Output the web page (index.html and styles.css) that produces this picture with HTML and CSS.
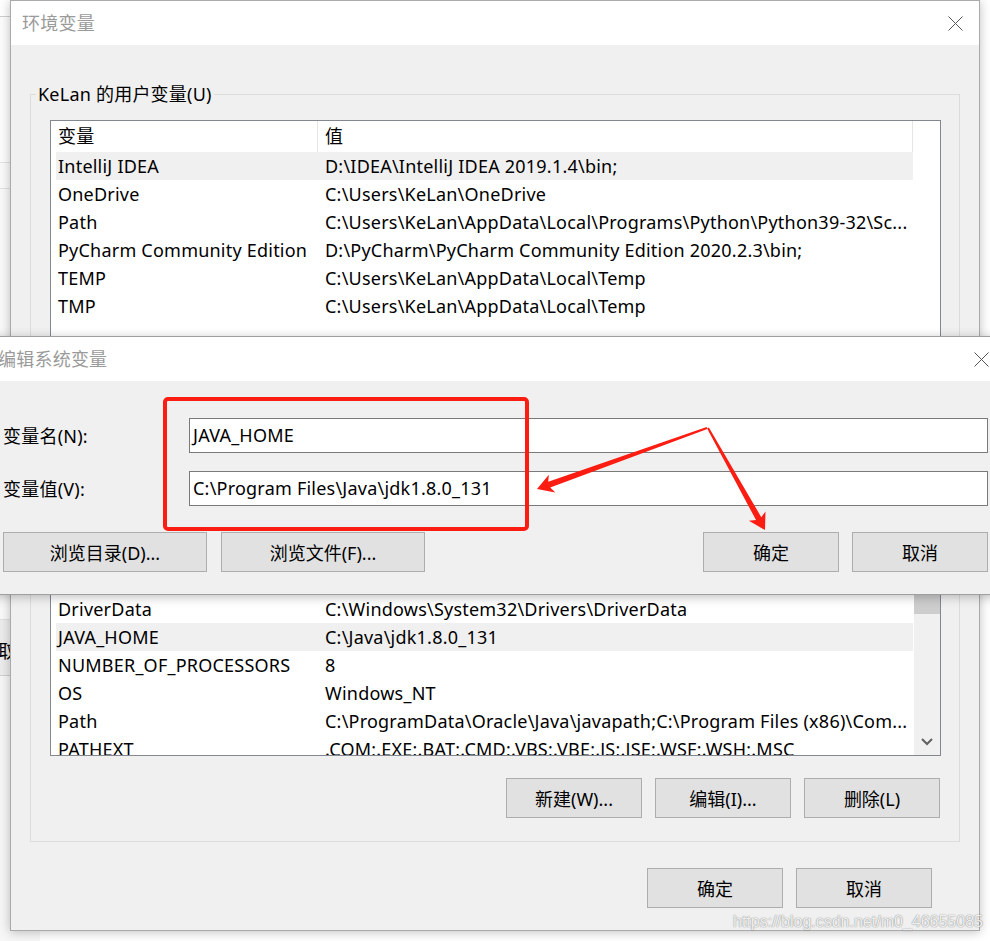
FILE: index.html
```html
<!DOCTYPE html>
<html lang="zh-CN">
<head>
<meta charset="utf-8">
<title>环境变量</title>
<link rel="stylesheet" href="styles.css">
</head>
<body>
<div class="desk">
  <div class="bgwin">
    <div class="bg-seg s1"></div>
    <div class="bg-seg s2"></div>
    <div class="bg-seg s3"></div>
    <div class="bg-seg s4"></div>
    <div class="bg-seg s5"><span class="bg-btn">取消</span></div>
    <div class="bg-seg s6"></div>
  </div>

  <div class="win">
    <div class="titlebar">
      <span class="title">环境变量</span>
      <svg class="close" viewBox="0 0 15 15"><path d="M0.5 0.5L14.5 14.5M14.5 0.5L0.5 14.5"/></svg>
    </div>
    <div class="body">
      <fieldset class="group">
        <legend>KeLan 的用户变量(U)</legend>
        <div class="group-in">
          <div class="list user">
            <div class="rows">
              <div class="row head"><span class="k">变量</span><span class="v">值</span></div>
              <div class="row sel"><span class="k">IntelliJ IDEA</span><span class="v">D:\IDEA\IntelliJ IDEA 2019.1.4\bin;</span></div>
              <div class="row"><span class="k">OneDrive</span><span class="v">C:\Users\KeLan\OneDrive</span></div>
              <div class="row"><span class="k">Path</span><span class="v">C:\Users\KeLan\AppData\Local\Programs\Python\Python39-32\Sc...</span></div>
              <div class="row"><span class="k">PyCharm Community Edition</span><span class="v">D:\PyCharm\PyCharm Community Edition 2020.2.3\bin;</span></div>
              <div class="row"><span class="k">TEMP</span><span class="v">C:\Users\KeLan\AppData\Local\Temp</span></div>
              <div class="row"><span class="k">TMP</span><span class="v">C:\Users\KeLan\AppData\Local\Temp</span></div>
            </div>
          </div>
          <div class="btnrow">
            <button class="btn">新建(N)...</button>
            <button class="btn">编辑(E)...</button>
            <button class="btn">删除(D)</button>
          </div>
        </div>
      </fieldset>

      <fieldset class="group sysgroup">
        <legend>系统变量(S)</legend>
        <div class="group-in">
          <div class="list sys">
            <div class="rows">
              <div class="row head"><span class="k">变量</span><span class="v">值</span></div>
              <div class="row"><span class="k">ComSpec</span><span class="v">C:\Windows\system32\cmd.exe</span></div>
              <div class="row"><span class="k">DriverData</span><span class="v">C:\Windows\System32\Drivers\DriverData</span></div>
              <div class="row sel"><span class="k">JAVA_HOME</span><span class="v">C:\Java\jdk1.8.0_131</span></div>
              <div class="row"><span class="k">NUMBER_OF_PROCESSORS</span><span class="v">8</span></div>
              <div class="row"><span class="k">OS</span><span class="v">Windows_NT</span></div>
              <div class="row"><span class="k">Path</span><span class="v">C:\ProgramData\Oracle\Java\javapath;C:\Program Files (x86)\Com...</span></div>
              <div class="row"><span class="k">PATHEXT</span><span class="v">.COM;.EXE;.BAT;.CMD;.VBS;.VBE;.JS;.JSE;.WSF;.WSH;.MSC</span></div>
              <div class="row"><span class="k">PROCESSOR_ARCHITECTURE</span><span class="v">AMD64</span></div>
            </div>
            <div class="sbar">
              <div class="sb-btn"></div>
              <div class="sb-thumb"></div>
              <div class="sb-fill"></div>
              <div class="sb-btn">
                <svg class="chev" viewBox="0 0 12 8"><path d="M1 1L6 6L11 1"/></svg>
              </div>
            </div>
          </div>
          <div class="btnrow">
            <button class="btn">新建(W)...</button>
            <button class="btn">编辑(I)...</button>
            <button class="btn">删除(L)</button>
          </div>
        </div>
      </fieldset>

      <div class="footer">
        <button class="btn">确定</button>
        <button class="btn">取消</button>
      </div>
    </div>
  </div>

  <div class="dialog">
    <div class="titlebar">
      <span class="title">编辑系统变量</span>
      <svg class="close" viewBox="0 0 15 15"><path d="M0.5 0.5L14.5 14.5M14.5 0.5L0.5 14.5"/></svg>
    </div>
    <div class="dlg-body">
      <div class="form">
        <label class="lbl">变量名(N):</label>
        <div class="input">JAVA_HOME</div>
        <label class="lbl">变量值(V):</label>
        <div class="input">C:\Program Files\Java\jdk1.8.0_131</div>
      </div>
      <div class="dlg-btns">
        <div class="bgroup left">
          <button class="btn wide">浏览目录(D)...</button>
          <button class="btn wide">浏览文件(F)...</button>
        </div>
        <div class="bgroup right">
          <button class="btn">确定</button>
          <button class="btn">取消</button>
        </div>
      </div>
    </div>
  </div>

  <svg class="annot" viewBox="0 0 990 941">
    <rect x="165" y="399" width="362" height="130" rx="3" ry="3" fill="none" stroke="#fb1c12" stroke-width="4"/>
    <polygon fill="#fb1c12" points="707.34,428.94 550.24,487.42 555.27,492.53 537,489 548.85,474.65 548.22,481.78 706.66,427.06"/>
    <polygon fill="#fb1c12" points="708.87,427.51 761.28,517.19 765.48,511.39 765,530 748.9,520.67 756.04,520.11 707.13,428.49"/>
  </svg>

  <div class="watermark">https://blog.csdn.net/m0_46655085</div>
</div>
</body>
</html>
```

FILE: styles.css
```css
* { box-sizing: border-box; margin: 0; padding: 0; }
html, body { width: 990px; height: 941px; overflow: hidden; background: #fff; }
body {
  font-family: "Noto Sans", "Noto Sans CJK SC", sans-serif;
  font-size: 18px;
  letter-spacing: 0.22px;
  color: #000;
}
.desk { position: relative; width: 990px; height: 941px; }

/* background desktop window (behind) */
.bgwin {
  position: absolute; left: 0; top: 0; z-index: 0;
  width: 40px; height: 941px;
  display: flex; flex-direction: column;
  background: #fff;
}
.bg-seg { flex: none; }
.s1 { height: 17px; border-bottom: 1px solid #cfcfcf; }
.s2 { height: 146px; border-bottom: 1px solid #e2e2e2; background: #fcfcfc; }
.s3 { height: 26px; border-bottom: 1px solid #e2e2e2; background: #fafafa; }
.s4 { height: 431px; border-bottom: 1px solid #e0e0e0; background: #f9f9f9; }
.s5 { height: 56px; border-bottom: 1px solid #d0d0d0; background: #ececec; display: flex; align-items: center; padding-top: 6px; }
.bg-btn { margin-left: -2px; line-height: 24px; white-space: nowrap; }
.s6 { flex: 1; background: #f6f6f6; }

/* main window */
.win {
  position: relative; z-index: 1;
  margin-left: 10px;
  width: 970px; height: 931px;
  border: 1px solid #aaa;
  background: #f0f0f0;
  box-shadow: 0 1px 10px rgba(0, 0, 0, 0.25);
  display: flex; flex-direction: column;
}
.titlebar {
  height: 44px; flex: none;
  background: #fff;
  display: flex; align-items: center; justify-content: space-between;
  padding: 0 16px 0 11px;
}
.title { color: #9a9a9a; line-height: 24px; white-space: nowrap; }
.close { width: 15px; height: 15px; display: block; flex: none; }
.close path { stroke: #555; stroke-width: 1; fill: none; }

.body { flex: 1; padding: 37px 19px 0; }

fieldset.group { border: 1px solid #dcdcdc; min-width: 0; }
fieldset.group legend {
  margin-left: 5px; padding: 0 2px;
  height: 24px; line-height: 24px;
  white-space: nowrap;
}
.sysgroup { margin-top: 9px; }
.group-in { padding: 14px 18px 23px 19px; }

.list { border: 1px solid #828790; background: #fff; overflow: hidden; display: flex; }
.list.user { height: 282px; }
.list.sys { height: 221px; }
.rows { flex: 1; min-width: 0; overflow: hidden; }
.row {
  display: grid; grid-template-columns: 262px 595px;
  width: 857px; margin-left: 5px;
  height: 28px; line-height: 28px;
  white-space: nowrap;
}
.row span { overflow: hidden; white-space: nowrap; }
.row .k { padding-left: 2px; }
.row .v { padding-left: 7px; }
.row.head { height: 31px; line-height: 31px; }
.row.head span { border-right: 1px solid #e5e5e5; }
.row.sel { background: #f0f0f0; }

.sbar { width: 26px; flex: none; background: #f0f0f0; display: flex; flex-direction: column; }
.sb-btn { height: 26px; flex: none; display: flex; align-items: center; justify-content: center; }
.sb-thumb { height: 52px; flex: none; background: #cdcdcd; }
.sb-fill { flex: 1; }
.chev { width: 12px; height: 8px; display: block; }
.chev path { stroke: #606060; stroke-width: 2; fill: none; }

.btnrow { display: flex; justify-content: flex-end; gap: 13px; margin-top: 22px; padding-right: 1px; }
.btn {
  width: 136px; height: 40px; flex: none;
  background: #e1e1e1;
  border: 1px solid #adadad;
  font: inherit; color: #000;
  display: flex; align-items: center; justify-content: center;
  white-space: nowrap;
}
.footer { display: flex; justify-content: flex-end; gap: 13px; margin-top: 26px; padding-right: 28px; }

/* edit dialog on top */
.dialog {
  position: absolute; z-index: 2;
  left: -11px; top: 336px;
  width: 1011px;
  border: 1px solid #9f9f9f;
  background: #f0f0f0;
  box-shadow: 0 2px 10px rgba(0, 0, 0, 0.25);
}
.dialog .titlebar { padding: 0 10px 0 8px; }
.dlg-body { padding: 37px 11px 22px 13px; }
.form { display: grid; grid-template-columns: 186px 1fr; row-gap: 18px; align-items: center; }
.lbl { line-height: 24px; white-space: nowrap; }
.input {
  height: 35px; border: 1px solid #7a7a7a; background: #fff;
  padding-left: 3px; line-height: 33px; white-space: nowrap; overflow: hidden;
}
.dlg-btns { display: flex; justify-content: space-between; margin-top: 26px; }
.bgroup { display: flex; }
.bgroup.left { gap: 14px; }
.bgroup.right { gap: 13px; }
.btn.wide { width: 204px; }

.annot { position: absolute; left: 0; top: 0; width: 990px; height: 941px; z-index: 3; pointer-events: none; }

.watermark {
  position: absolute; z-index: 4;
  left: 733px; top: 911px;
  font-family: "Liberation Sans", Arial, sans-serif;
  font-size: 16px; line-height: 22px;
  letter-spacing: 0;
  color: rgba(255, 255, 255, 0.9);
  text-shadow: 0 0 1px rgba(0, 0, 0, 0.45), 0 0 2px rgba(0, 0, 0, 0.2);
  white-space: nowrap;
}
```
